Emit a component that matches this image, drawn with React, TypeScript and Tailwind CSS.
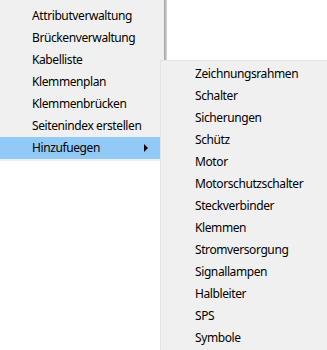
const mainItems = [
  'Attributverwaltung',
  'Brückenverwaltung',
  'Kabelliste',
  'Klemmenplan',
  'Klemmenbrücken',
  'Seitenindex erstellen',
]

const subItems = [
  'Zeichnungsrahmen',
  'Schalter',
  'Sicherungen',
  'Schütz',
  'Motor',
  'Motorschutzschalter',
  'Steckverbinder',
  'Klemmen',
  'Stromversorgung',
  'Signallampen',
  'Halbleiter',
  'SPS',
  'Symbole',
]

const font = { fontFamily: '"Segoe UI", "Noto Sans", sans-serif' }

export default function App() {
  return (
    <div
      className="relative w-[327px] h-[350px] overflow-hidden bg-white text-[12px] tracking-[-0.4px] text-black"
      style={font}
    >
      {/* Hauptmenue */}
      <div className="flex w-[167px]">
        <div className="w-[164px] bg-[#f0f0f0] pt-[5px] pb-[2px]">
          {mainItems.map((item) => (
            <div key={item} className="h-[22px] flex items-center pl-[32px]">
              {item}
            </div>
          ))}
          <div className="h-[22px] flex items-center justify-between pl-[32px] pr-[12px] mr-[4px] bg-[#91c9f7]">
            <span>Hinzufuegen</span>
            <span className="w-0 h-0 border-y-[4px] border-y-transparent border-l-[4px] border-l-black" />
          </div>
        </div>
        <div className="w-[3px] bg-gradient-to-r from-[#a0a0a0] to-[#d8d8d8]" />
      </div>

      {/* Untermenue */}
      <div className="absolute left-[160px] top-[60px] w-[180px] h-[300px] bg-[#f0f0f0] border-l border-t border-[#e3e3e3] pt-[2px]">
        {subItems.map((item) => (
          <div key={item} className="h-[22px] flex items-center pl-[34px]">
            {item}
          </div>
        ))}
      </div>
    </div>
  )
}
